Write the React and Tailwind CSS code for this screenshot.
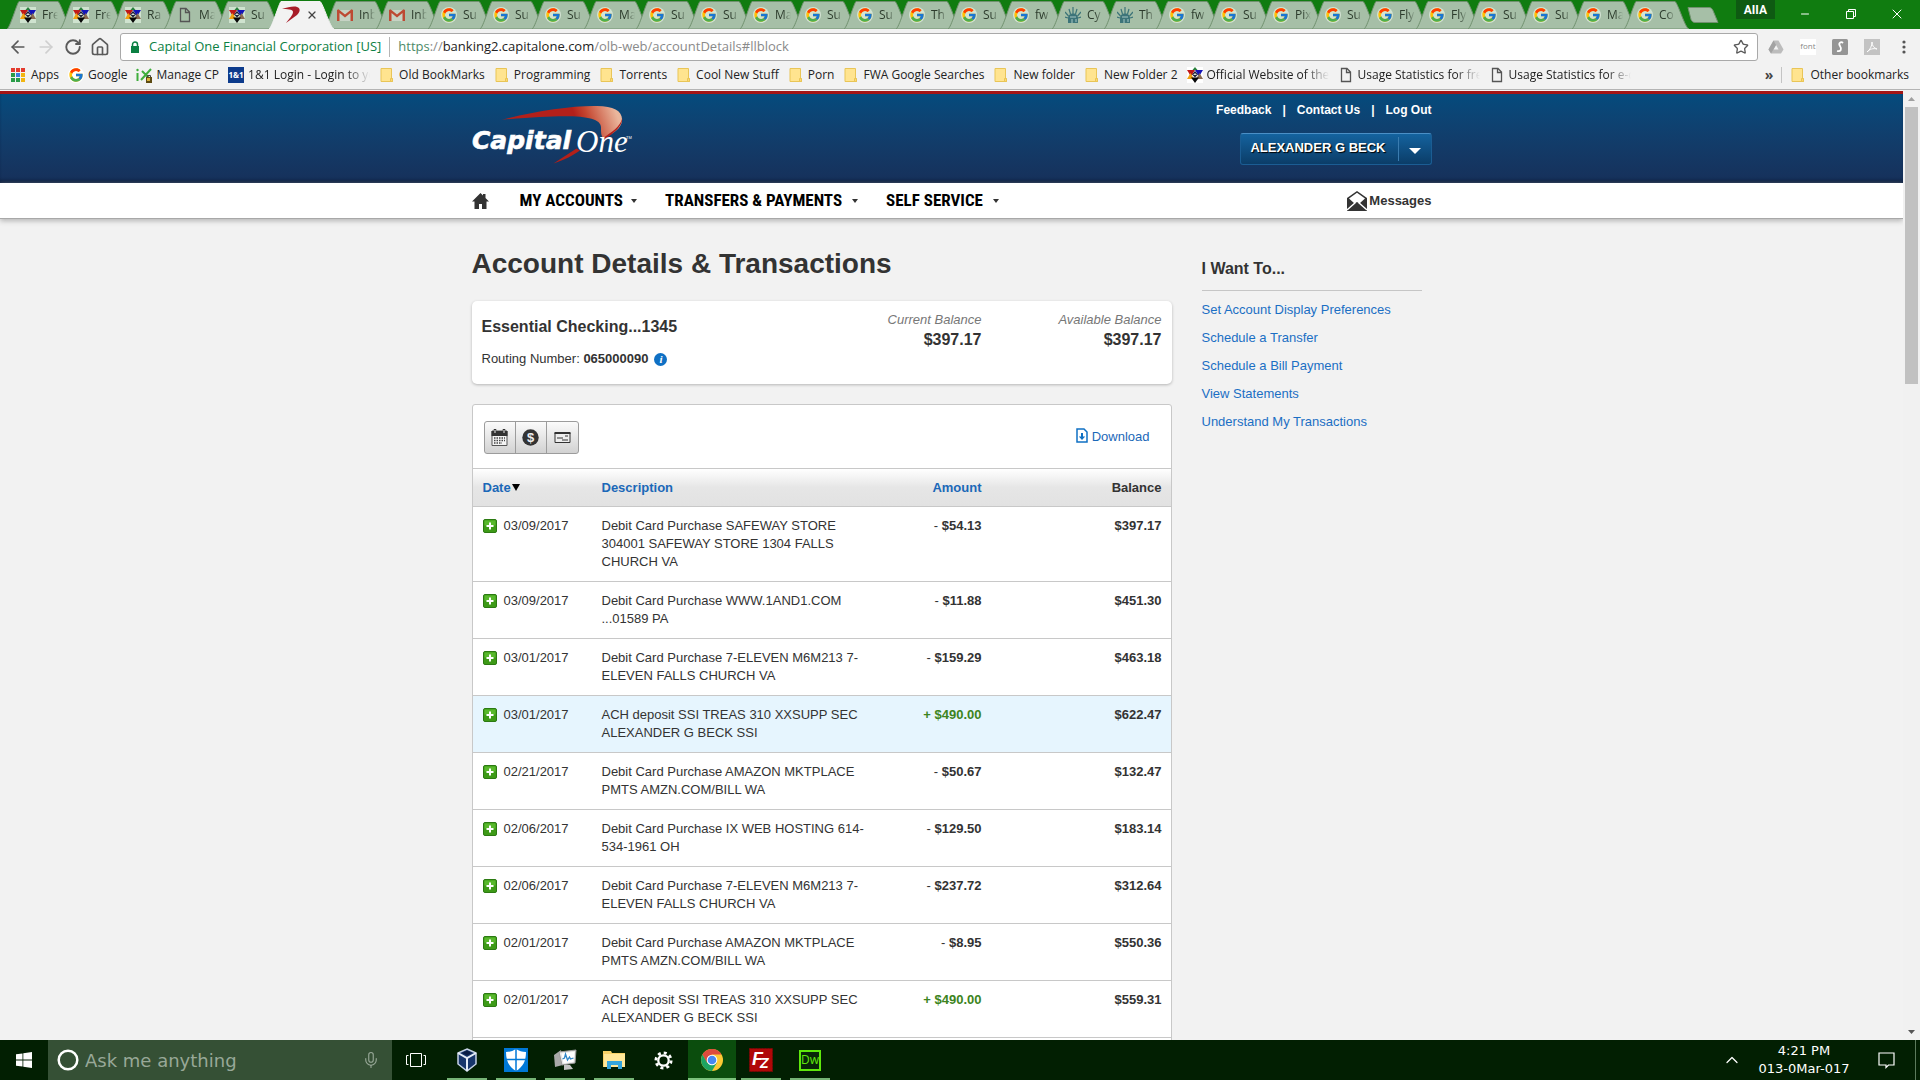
import React from 'react';
import { FcGoogle } from 'react-icons/fc';
import { ArrowLeft, ArrowRight, RotateCw, House, Star, X, Minus, ChevronUp, Mic } from 'lucide-react';

const tabs = [
  ['star', 'Fre'], ['star', 'Fre'], ['star', 'Ra'], ['page', 'Ma'], ['star', 'Su'], ['capital', ''],
  ['mail', 'Inb'], ['mail', 'Inb'], ['google', 'Su'], ['google', 'Su'], ['google', 'Su'], ['google', 'Ma'],
  ['google', 'Su'], ['google', 'Su'], ['google', 'Ma'], ['google', 'Su'], ['google', 'Su'], ['google', 'Th'],
  ['google', 'Su'], ['google', 'fw'], ['liberty', 'Cy'], ['liberty', 'Th'], ['google', 'fw'], ['google', 'Su'],
  ['google', 'Pix'], ['google', 'Su'], ['google', 'Fly'], ['google', 'Fly'], ['google', 'Su'], ['google', 'Su'],
  ['google', 'Ma'], ['google', 'Co'],
];

const bookmarks = [
  ['apps', 'Apps'], ['google', 'Google'], ['ix', 'Manage CP'], ['one', '1&1 Login - Login to yo'],
  ['folder', 'Old BookMarks'], ['folder', 'Programming'], ['folder', 'Torrents'], ['folder', 'Cool New Stuff'],
  ['folder', 'Porn'], ['folder', 'FWA Google Searches'], ['folder', 'New folder'], ['folder', 'New Folder 2'],
  ['star', 'Official Website of the'], ['page', 'Usage Statistics for fre'], ['page', 'Usage Statistics for e-c'],
];

const transactions = [
  { date: '03/09/2017', text: 'Debit Card Purchase SAFEWAY STORE 304001 SAFEWAY STORE 1304 FALLS CHURCH VA', amount: '$54.13', balance: '$397.17' },
  { date: '03/09/2017', text: 'Debit Card Purchase WWW.1AND1.COM ...01589 PA', amount: '$11.88', balance: '$451.30' },
  { date: '03/01/2017', text: 'Debit Card Purchase 7-ELEVEN M6M213 7-ELEVEN FALLS CHURCH VA', amount: '$159.29', balance: '$463.18' },
  { date: '03/01/2017', text: 'ACH deposit SSI TREAS 310 XXSUPP SEC ALEXANDER G BECK SSI', amount: '$490.00', balance: '$622.47', credit: true, active: true },
  { date: '02/21/2017', text: 'Debit Card Purchase AMAZON MKTPLACE PMTS AMZN.COM/BILL WA', amount: '$50.67', balance: '$132.47' },
  { date: '02/06/2017', text: 'Debit Card Purchase IX WEB HOSTING 614-\u200b534-1961 OH', amount: '$129.50', balance: '$183.14' },
  { date: '02/06/2017', text: 'Debit Card Purchase 7-ELEVEN M6M213 7-ELEVEN FALLS CHURCH VA', amount: '$237.72', balance: '$312.64' },
  { date: '02/01/2017', text: 'Debit Card Purchase AMAZON MKTPLACE PMTS AMZN.COM/BILL WA', amount: '$8.95', balance: '$550.36' },
  { date: '02/01/2017', text: 'ACH deposit SSI TREAS 310 XXSUPP SEC ALEXANDER G BECK SSI', amount: '$490.00', balance: '$559.31', credit: true },
];

const links = [
  'Set Account Display Preferences', 'Schedule a Transfer', 'Schedule a Bill Payment', 'View Statements', 'Understand My Transactions',
];

function Favicon({ type, tab }) {
  switch (type) {
    case 'google':
      return (
        <span className={tab ? 'shrink-0 rounded-full bg-[#d3e3d3]' : 'shrink-0 rounded-full bg-white'}>
          <FcGoogle className="w-4 h-4" />
        </span>
      );
    case 'star':
      return (
        <svg viewBox="0 0 16 16" className={tab ? 'w-4 h-4 shrink-0 bg-[#cfe3cf]' : 'w-4 h-4 shrink-0 bg-white'}>
          <path d="M5.500 3L8 0l2.500 3z" fill="#28803c" />
          <path d="M0 3h8l-4 6.500z" fill="#c01818" />
          <path d="M8 3h8l-4 6.500z" fill="#1414b8" />
          <path d="M0 12l3.500-6L7 12z" fill="#f0a010" />
          <path d="M9 12l3.500-6L16 12z" fill="#8a6a50" />
          <path d="M5 7.500L8 4l3 3.500-3 3z" fill="#20203a" />
          <path d="M6 8h4L8 6z" fill="#d8e0d8" />
          <path d="M4 10.500h8L8 16z" fill="#080808" />
        </svg>
      );
    case 'page':
      return (
        <svg viewBox="0 0 16 16" className="w-4 h-4 shrink-0" fill="none" stroke="#555" strokeWidth="1.3">
          <path d="M3.500 1.500h5.500L12.500 5v9.500h-9zM8.500 1.500v4h4" />
        </svg>
      );
    case 'mail':
      return (
        <svg viewBox="0 0 16 16" className="w-4 h-4 shrink-0">
          <path d="M1 3h14v11H1z" fill="#c6d3c4" />
          <path d="M0 14V3l1.500-.8L8 7.500l6.500-5.300L16 3v11h-2.500V6L8 10.500 2.500 6v8z" fill="#bd4a33" />
        </svg>
      );
    case 'liberty':
      return (
        <svg viewBox="0 0 16 16" className="w-4 h-4 shrink-0">
          <path d="M3 16V11C3 8 5 6.500 8 6.500s5 2 5 4.500v5z" fill="#3c7479" />
          <path d="M8 7V0M5.500 7L4 2M10.500 7L12 2M3.500 9L0 5M12.500 9L16 5M3 11l-3-1M13 11l3-1" stroke="#3c7479" strokeWidth="1.2" />
          <path d="M5 10h6M7 12v4M11 12v3" stroke="#a9c9c6" strokeWidth="1" />
        </svg>
      );
    case 'capital':
      return (
        <svg viewBox="0 0 18 18" className="w-[18px] h-[18px] shrink-0">
          <path d="M0 3C6 1 12 0 15 1c4 1 3 5 0 8L4 17c3-4 7-8 7-11S5 3 0 3z" fill="#a81c28" />
        </svg>
      );
    case 'apps':
      return (
        <svg viewBox="0 0 14 14" className="w-[14px] h-[14px] mr-[2px] shrink-0">
          {['#e33b2e', '#e33b2e', '#e33b2e', '#2a9c48', '#3a7ee0', '#f2b511', '#2a9c48', '#2a9c48', '#f2b511'].map((c, i) => (
            <rect key={i} x={(i % 3) * 5} y={Math.floor(i / 3) * 5} width="4" height="4" fill={c} />
          ))}
        </svg>
      );
    case 'ix':
      return (
        <svg viewBox="0 0 16 16" className="w-4 h-4 shrink-0" fill="none">
          <path d="M1.500 6v8M6 4l9 9M15 2L5 13" stroke="#3fae3c" strokeWidth="2" />
          <circle cx="1.500" cy="3" r="1.200" fill="#3fae3c" />
          <rect x="10" y="10" width="6" height="6" fill="#5c4a12" />
          <path d="M11.500 10V8.500h3V10" stroke="#444" />
          <rect x="11" y="11" width="3" height="3" fill="#d8b23c" />
        </svg>
      );
    case 'one':
      return (
        <span className="w-4 h-4 shrink-0 bg-[#0d3b8c] text-white text-[8px] leading-4 font-bold text-center">1&amp;1</span>
      );
    default:
      return (
        <svg viewBox="0 0 16 16" className="w-4 h-4 shrink-0">
          <path d="M2 1.500h10.500v9.500l1 1v2.500H2z" fill="#ffe48f" stroke="#e9c557" />
          <path d="M11.500 14.500v-3h2v3z" fill="#ffd970" stroke="#e9c557" />
        </svg>
      );
  }
}

function Tab({ type, title }) {
  const active = type === 'capital';
  return (
    <li className={active ? 'relative z-10 w-[53px] h-[29px] ml-px mr-[2px]' : 'relative w-[52px] first:w-[53px] h-[29px]'}>
      <svg viewBox="0 0 65 29" className="absolute left-0 top-0 w-[65px] h-[29px]">
        <path d="M0 29C3 28 10 3 12 1.500h39C54 3 61 28 65 29z" fill={active ? '#f2f2f2' : '#a6bfa7'} stroke={active ? '#f2f2f2' : '#71916f'} />
      </svg>
      <a href="#tab" className="relative flex items-center gap-[6px] pl-[13px] h-full text-[12px] text-[#2c3b2c]">
        <Favicon type={type} tab />
        {active ? (
          <X className="w-3 h-3 shrink-0 text-[#444]" strokeWidth={2.5} />
        ) : (
          <span className="w-4 whitespace-nowrap [mask-image:linear-gradient(to_right,black_50%,transparent)]">{title}</span>
        )}
      </a>
    </li>
  );
}

function Caret({ className }) {
  return (
    <svg viewBox="0 0 8 5" className={className} preserveAspectRatio="none">
      <path d="M0 0h8L4 5z" fill="currentColor" />
    </svg>
  );
}

function Browser() {
  return (
    <header className="shrink-0 bg-[#f2f2f2] font-['Open_Sans','Noto_Sans',sans-serif]">
      <div className="flex justify-between bg-[#107c10]">
        <div className="flex items-center">
          <ul className="flex pl-[7px]">
            {tabs.map(([type, title], i) => <Tab key={i} type={type} title={title} />)}
          </ul>
          <button type="button" aria-label="New tab" className="ml-[10px]">
            <svg viewBox="0 0 34 16" className="w-[34px] h-4">
              <path d="M2 .5h21c2 0 3 1 4 3l5 12H9c-2 0-3-1-4-3z" fill="#a6bfa7" stroke="#71916f" />
            </svg>
          </button>
        </div>
        <div className="flex items-start text-white">
          <button type="button" className="mr-[7px] px-2 h-[19px] bg-[#0e5a12] font-[Roboto,sans-serif] text-[12px] font-bold leading-[18px]">AIIA</button>
          <button type="button" aria-label="Minimize" className="w-[46px] h-[28px] flex items-center justify-center"><Minus className="w-3 h-3" /></button>
          <button type="button" aria-label="Restore" className="w-[46px] h-[28px] flex items-center justify-center">
            <svg viewBox="0 0 10 10" className="w-[10px] h-[10px]" fill="none" stroke="currentColor"><path d="M.5 2.500h7v7h-7zM2.500 2.500v-2h7v7h-2" /></svg>
          </button>
          <button type="button" aria-label="Close" className="w-[46px] h-[28px] flex items-center justify-center"><X className="w-4 h-4" strokeWidth={1.5} /></button>
        </div>
      </div>

      <div className="flex items-center h-9 px-2 text-[#5a5a5a]">
        <div className="flex items-center gap-2 w-28">
          <button type="button" aria-label="Back"><ArrowLeft className="w-5 h-5" /></button>
          <button type="button" aria-label="Forward"><ArrowRight className="w-5 h-5 text-[#cfcfcf]" /></button>
          <button type="button" aria-label="Reload"><RotateCw className="w-[18px] h-[18px]" strokeWidth={2.5} /></button>
          <button type="button" aria-label="Home"><House className="w-5 h-5" /></button>
        </div>
        <div className="flex flex-1 items-center h-7 px-2 bg-white border border-[#a9a9a9] rounded-[3px] text-[13px]">
          <svg viewBox="0 0 10 13" className="w-[10px] h-[13px] mx-px mr-[9px] shrink-0">
            <path d="M1 5h8v7H1z" fill="#0b8043" />
            <path d="M2.500 5V3.500a2.500 2.500 0 015 0V5" fill="none" stroke="#0b8043" strokeWidth="1.500" />
          </svg>
          <span className="shrink-0 text-[#0b8043]">Capital One Financial Corporation [US]</span>
          <span className="mx-2 w-px h-5 shrink-0 bg-[#b5b5b5]" />
          <p className="flex-1 text-[#8a8a8a]">
            <span className="text-[#4c8a67]">https</span>://<span className="text-[#222]">banking2.capitalone.com</span>/olb-web/accountDetails#llblock
          </p>
          <button type="button" aria-label="Bookmark"><Star className="w-4 h-4" /></button>
        </div>
        <div className="flex items-center gap-4 pl-[10px]">
          <svg viewBox="0 0 16 16" className="w-4 h-4">
            <path d="M5.500 1.500h5l5 9-2.500 4H3l-2.500-4z" fill="#bcbcbc" />
            <path d="M8 6l2.500 4.500h-5z" fill="#f2f2f2" />
            <path d="M5.500 1.500L.5 10.500l2.500 4L8 6z" fill="#a3a3a3" />
          </svg>
          <span className="w-4 h-4 bg-white text-[8px] leading-[14px] text-center text-[#888]">font</span>
          <svg viewBox="0 0 16 16" className="w-4 h-4">
            <rect width="16" height="16" rx="1.500" fill="#959595" />
            <path d="M11 4C9 2 6 4 8 7s1 6-3 5" fill="none" stroke="#fff" strokeWidth="1.800" />
          </svg>
          <svg viewBox="0 0 16 16" className="w-4 h-4">
            <rect width="16" height="16" fill="#c3c3c3" />
            <path d="M3 13c3-2 5-6 5-10 0 4 2 6 5 7-4-1-7 0-10 3z" fill="none" stroke="#fff" />
          </svg>
          <svg viewBox="0 0 16 16" className="w-4 h-4" fill="#555"><circle cx="8" cy="3" r="1.600" /><circle cx="8" cy="8" r="1.600" /><circle cx="8" cy="13" r="1.600" /></svg>
        </div>
      </div>

      <nav className="flex items-center h-[25px] pb-1 px-[11px] border-b border-[#b4b4b4] text-[12px] text-[#222]">
        <ul className="flex flex-1 items-center gap-[9px]">
          {bookmarks.map(([type, title]) => (
            <li key={title}>
              <a href="#bookmark" className="flex items-center gap-1">
                <Favicon type={type} />
                <span className={title.length > 20 ? 'w-[122px] overflow-hidden whitespace-nowrap [mask-image:linear-gradient(to_right,black_80%,transparent)]' : 'whitespace-nowrap'}>{title}</span>
              </a>
            </li>
          ))}
        </ul>
        <button type="button" className="font-bold text-[14px] text-[#444] leading-4">»</button>
        <span className="mx-2 w-px h-4 bg-[#c4c4c4]" />
        <a href="#bookmark" className="flex items-center gap-1"><Favicon type="folder" />Other bookmarks</a>
      </nav>
    </header>
  );
}

function Logo() {
  return (
    <svg viewBox="7 0 168 75" className="w-[168px] h-[75px]" role="img" aria-label="Capital One">
      <defs>
        <linearGradient id="swoosh" x1="0" x2="1" y1="0.3" y2="0.2">
          <stop offset="0.6" stopColor="#b3201a" />
          <stop offset="0.7" stopColor="#c4452f" />
          <stop offset="0.95" stopColor="#eab69c" />
        </linearGradient>
      </defs>
      <path d="M37 21.700C70 13 108 7.500 132 8c17 .3 26 5 25 15-1 8-9 12-18 18-3-3-3-6-3-12-1-12-30-13-99-7.300z" fill="url(#swoosh)" />
      <path d="M157.300 20c0 9-9 15-17 21l-2-1c8-6 17-11 19-20z" fill="#b3201a" />
      <path d="M88.500 65.500l23-15 3.500 2c-7 5-15 9-26.500 13z" fill="#b3201a" />
      <text x="7" y="51" fontSize="25" fontWeight="700" fontStyle="italic" fill="#fff" stroke="#fff" strokeWidth=".6" fontFamily="'DejaVu Sans', sans-serif">Capital</text>
      <text x="111" y="54" fontSize="31" fontStyle="italic" fill="#fff" fontFamily="'Liberation Serif', serif">One</text>
      <text x="161" y="41" fontSize="4" fill="#fff" fontFamily="'Liberation Sans', sans-serif">TM</text>
    </svg>
  );
}

function Page() {
  return (
    <div className="flex-1 overflow-hidden bg-[#f2f2f2]">
      <div className="border-t-[3px] border-[#a31515] bg-linear-to-b from-[#044b7d] to-[#16305a] shadow-[inset_0_-4px_3px_-1px_#0d2140]">
        <div className="flex justify-between w-[960px] mx-auto h-[89px] pt-1">
          <a href="#home"><Logo /></a>
          <div className="flex flex-col items-end font-bold text-white">
            <div className="flex gap-[11px] mt-1 text-[12px] leading-4">
              <a href="#feedback">Feedback</a>
              <span>|</span>
              <a href="#contact">Contact Us</a>
              <span>|</span>
              <a href="#logout">Log Out</a>
            </div>
            <button type="button" className="flex items-center mt-[15px] h-8 pl-[9px] rounded-[3px] border border-[#1b5d93] border-t-[#4a8fc6] bg-linear-to-b from-[#14639f] to-[#0b3d68] text-[13px] font-bold">
              <span className="pb-[3px] pr-3 [text-shadow:1px_1px_1px_#000]">ALEXANDER G BECK</span>
              <span className="flex items-center h-6 px-[10px] border-l border-[#3a7cb0]"><Caret className="w-3 h-[6px] mt-1" /></span>
            </button>
          </div>
        </div>
      </div>

      <nav className="relative bg-white border-b border-[#a8a8a8] shadow-[0_2px_5px_#b5b5b5]">
        <div className="flex items-center w-[960px] mx-auto h-[35px] pt-px font-['Roboto_Condensed',Roboto,sans-serif] text-[17px] font-bold text-black">
          <a href="#home" aria-label="Home" className="mr-[31px] text-[#333]">
            <svg viewBox="0 0 17 16" className="w-[17px] h-4" fill="currentColor"><path d="M8.500 0L11 2.500V1h2.500v4L17 8.500h-2.500V16H10v-5H7v5H2.500V8.500H0z" /></svg>
          </a>
          <a href="#accounts" className="flex items-center gap-2 mr-7">MY ACCOUNTS <Caret className="w-[6px] h-1 text-[#333]" /></a>
          <a href="#transfers" className="flex items-center gap-[10px] mr-7">TRANSFERS &amp; PAYMENTS <Caret className="w-[6px] h-1 text-[#333]" /></a>
          <a href="#service" className="flex items-center gap-[10px]">SELF SERVICE <Caret className="w-[6px] h-1 text-[#333]" /></a>
          <a href="#messages" className="flex items-center gap-[2px] ml-auto font-['Liberation_Sans',Arial,sans-serif] text-[13px] text-[#333]">
            <svg viewBox="0 0 20 20" className="w-5 h-5">
              <path d="M0 7L10 0l10 7v13H0z" fill="#333" />
              <path d="M2 7.500l8-5.800 8 5.800-5.500 5L10 11l-2.500 1.500z" fill="#fff" />
              <path d="M0 19l8.500-7.500M20 19l-8.500-7.500" stroke="#fff" strokeWidth="1.400" />
            </svg>
            Messages
          </a>
        </div>
      </nav>

      <div className="flex gap-[30px] w-[960px] mx-auto">
        <main className="w-[700px]">
          <h1 className="mt-7 mb-5 text-[28px] leading-[34px] font-bold text-[#333]">Account Details &amp; Transactions</h1>

          <section className="flex h-[83px] pl-[10px] pr-[10px] pt-[11px] rounded-[5px] bg-white shadow-[0_1px_3px_#b5b5b5]">
            <div className="flex-1">
              <h2 className="mt-[5px] text-[16px] leading-5 font-bold">Essential Checking...1345</h2>
              <p className="flex items-center mt-3 text-[13px] leading-5">
                Routing Number:&nbsp;<b>065000090</b>
                <button type="button" aria-label="Routing number help" className="ml-[6px] w-[13px] h-[13px] rounded-full bg-[#0f70c4] font-['Liberation_Serif',serif] text-[11px] leading-[13px] italic font-bold text-white">i</button>
              </p>
            </div>
            <dl className="w-[180px] text-right">
              <dt className="text-[13px] leading-4 italic text-[#777]">Current Balance</dt>
              <dd className="text-[16px] leading-6 font-bold">$397.17</dd>
            </dl>
            <dl className="w-[180px] text-right">
              <dt className="text-[13px] leading-4 italic text-[#777]">Available Balance</dt>
              <dd className="text-[16px] leading-6 font-bold">$397.17</dd>
            </dl>
          </section>

          <section className="mt-5 rounded-t-[3px] border border-[#c8c8c8] bg-white">
            <div className="flex justify-between h-[63px] pt-4 pl-[11px] pr-[21px]">
              <div className="flex h-[33px] rounded-[3px] border border-[#9c9c9c] divide-x divide-[#9c9c9c] bg-linear-to-b from-[#fbfbfb] to-[#d2d2d2]">
                <button type="button" aria-label="Filter by date" className="w-[31px] flex items-center justify-center">
                  <svg viewBox="0 0 17 17" className="w-[17px] h-[17px]">
                    <path d="M1 2h15v14.500H1z" fill="#f4f4f4" stroke="#555" />
                    <path d="M.5 2h16v5H.5z" fill="#333" />
                    <path d="M4 0v4M13 0v4" stroke="#333" strokeWidth="2.500" />
                    <path d="M4 1v3M13 1v3" stroke="#eee" />
                    <path d="M3 9h11M3 11.500h11M3 14h8" stroke="#444" strokeWidth="1.500" strokeDasharray="1.500 1" />
                  </svg>
                </button>
                <button type="button" aria-label="Filter by amount" className="w-[31px] flex items-center justify-center">
                  <svg viewBox="0 0 17 17" className="w-[17px] h-[17px]">
                    <circle cx="8.500" cy="8.500" r="8.200" fill="#333" />
                    <text x="8.500" y="13" textAnchor="middle" fontSize="13" fontWeight="700" fill="#eee" fontFamily="'Liberation Sans', sans-serif">$</text>
                  </svg>
                </button>
                <button type="button" aria-label="Filter by check" className="w-[31px] flex items-center justify-center">
                  <svg viewBox="0 0 17 17" className="w-[17px] h-[17px]" fill="none" stroke="#333">
                    <path d="M1 4h15v9.500H1z" fill="#eee" />
                    <path d="M.5 4h16" strokeWidth="2" />
                    <path d="M3 9h6M11 7h3M8 11h6" strokeWidth="1.200" />
                  </svg>
                </button>
              </div>
              <a href="#download" className="flex items-start gap-1 pt-[7px] text-[13px] leading-[18px] text-[#1b68b8]">
                <svg viewBox="0 0 12 15" className="w-3 h-[15px]" fill="none" stroke="#0f70c4">
                  <path d="M1 1h7l3 3v10H1z" strokeWidth="1.500" />
                  <path d="M6 5v5" strokeWidth="2" />
                  <path d="M2.800 8.500h6.400L6 12z" fill="#0f70c4" stroke="none" />
                </svg>
                Download
              </a>
            </div>

            <table className="w-full table-fixed border-t border-[#c8c8c8] text-[13px] leading-[18px]">
              <colgroup>
                <col className="w-[129px]" />
                <col className="w-[270px]" />
                <col />
                <col className="w-[189px]" />
              </colgroup>
              <thead>
                <tr className="h-[38px] bg-linear-to-b from-white via-[#e6e6e6] to-[#e2e2e2] border-b border-[#c8c8c8] text-[#1b68b8]">
                  <th className="pl-[10px] text-left"><button type="button" className="flex items-center font-bold">Date<Caret className="ml-px w-2 h-[7px] text-black" /></button></th>
                  <th className="text-left"><button type="button" className="font-bold">Description</button></th>
                  <th className="text-right"><button type="button" className="font-bold">Amount</button></th>
                  <th className="pr-[9px] text-right text-[#333]">Balance</th>
                </tr>
              </thead>
              <tbody>
                {transactions.map((t, i) => (
                  <tr key={i} className={t.active ? 'align-top border-b border-[#c8c8c8] bg-[#e6f5fe]' : 'align-top border-b border-[#c8c8c8]'}>
                    <td className="pl-[10px] py-[10px]">
                      <span className="flex items-center gap-[7px]">
                        <button type="button" aria-label="Expand transaction">
                          <svg viewBox="0 0 14 14" className="w-[14px] h-[14px]">
                            <rect x=".5" y=".5" width="13" height="13" rx="1.500" fill="#3d9a17" stroke="#2c7a12" />
                            <path d="M1.500 1.500h11v5h-11z" fill="#58b82c" />
                            <path d="M7 3.500v7M3.500 7h7" stroke="#fff" strokeWidth="2" />
                          </svg>
                        </button>
                        {t.date}
                      </span>
                    </td>
                    <td className="py-[10px]">{t.text}</td>
                    <td className={t.credit ? 'py-[10px] text-right font-bold text-[#3c8420]' : 'py-[10px] text-right font-bold'}>
                      <span className={t.credit ? 'font-bold' : 'font-normal'}>{t.credit ? '+' : '-'}</span> {t.amount}
                    </td>
                    <td className="py-[10px] pr-[9px] text-right font-bold">{t.balance}</td>
                  </tr>
                ))}
              </tbody>
            </table>
            <div className="h-12" />
          </section>
        </main>

        <aside className="w-[220px] pt-[38px]">
          <h2 className="pb-[9px] border-b border-[#c6c6c6] text-[16px] leading-6 font-bold">I Want To...</h2>
          <ul className="pt-[5px] text-[13px] leading-7 text-[#1b6fc4]">
            {links.map((link) => <li key={link}><a href="#link">{link}</a></li>)}
          </ul>
        </aside>
      </div>
    </div>
  );
}

function TaskItem({ label, open = true, active, children }) {
  return (
    <button type="button" aria-label={label} className={active ? 'relative w-12 flex items-center justify-center bg-[#0b4d0d]' : 'relative w-12 flex items-center justify-center'}>
      {children}
      {open && <span className={active ? 'absolute inset-x-0 bottom-0 h-[2px] bg-[#7cc27c]' : 'absolute inset-x-1 bottom-0 h-[2px] bg-[#76b476]'} />}
    </button>
  );
}

function Taskbar() {
  return (
    <footer className="flex h-10 shrink-0 bg-[#021f02] text-white font-['DejaVu_Sans',sans-serif]">
      <button type="button" aria-label="Start" className="w-12 flex items-center justify-center">
        <svg viewBox="0 0 16 16" className="w-4 h-4" fill="#fff"><path d="M0 2.300L6.500 1.400v6.200H0zM7.300 1.300L16 0v7.600H7.300zM0 8.400h6.500v6.200L0 13.700zM7.300 8.400H16V16l-8.700-1.300z" /></svg>
      </button>
      <label className="flex items-center gap-[6px] w-[344px] pl-[9px] pr-3 bg-[#355035]">
        <svg viewBox="0 0 22 22" className="w-[22px] h-[22px]" fill="none" stroke="#fff" strokeWidth="2.500"><circle cx="11" cy="11" r="9.300" /></svg>
        <input type="text" aria-label="Search" placeholder="Ask me anything" className="flex-1 min-w-0 bg-transparent text-[18px] outline-none placeholder:text-[#98a898]" />
        <Mic className="w-[18px] h-[18px] text-[#98a898]" strokeWidth={1.5} />
      </label>
      <button type="button" aria-label="Task view" className="w-12 mr-[3px] flex items-center justify-center">
        <svg viewBox="0 0 20 14" className="w-5 h-[14px]" fill="none" stroke="#fff"><path d="M4.500 .5h11v13h-11zM2.500 2.500h-2v9h2M17.500 2.500h2v9h-2" /></svg>
      </button>
      <div className="flex gap-px">
        <TaskItem label="VirtualBox">
          <svg viewBox="0 0 22 24" className="w-[22px] h-6">
            <path d="M11 1l9 4v11l-9 7-9-7V5z" fill="#17356b" stroke="#c6d2e6" strokeWidth="1.500" />
            <path d="M2 5l9 5 9-5M11 10v13" fill="none" stroke="#e4ebf6" strokeWidth="2" />
            <path d="M6 5l5-2.500L16 5l-5 2.500z" fill="#0a1c44" />
          </svg>
        </TaskItem>
        <TaskItem label="Defender">
          <svg viewBox="0 0 24 24" className="w-6 h-6">
            <path d="M0 0h24v24H0z" fill="#0078d7" />
            <path d="M12 1c3 2 6 3 10 3 0 9-3 15-10 19C5 19 2 13 2 4c4 0 7-1 10-3z" fill="#fff" />
            <path d="M12 0v24M1 11.500h22" stroke="#0078d7" strokeWidth="1.500" />
          </svg>
        </TaskItem>
        <TaskItem label="Task Manager">
          <svg viewBox="0 0 24 22" className="w-6 h-[22px]">
            <path d="M1 6l7-5 2 15-8 2z" fill="#a9a9a9" />
            <path d="M6 3l17-2-1 13-13 2z" fill="#e8e8e8" stroke="#999" />
            <path d="M8.500 4.500l13-1.700-1 10-10 1.500z" fill="#fff" />
            <path d="M9.500 10l2-1 1-4 2 6 2-3 1 2 3-1" fill="none" stroke="#2f86c8" strokeWidth="1.300" />
            <path d="M11 16h6l3 4-9 1z" fill="#c4c4c4" />
          </svg>
        </TaskItem>
        <TaskItem label="File Explorer">
          <svg viewBox="0 0 22 20" className="w-[22px] h-5">
            <path d="M0 1h8l1 2h13v14H0z" fill="#f7d268" />
            <path d="M1 4h21v13H1z" fill="#ffe799" />
            <path d="M4 19v-8h15v8h-4v-4H8v4z" fill="#35a5dc" />
          </svg>
        </TaskItem>
        <TaskItem label="Settings" open={false}>
          <svg viewBox="0 0 20 20" className="w-[19px] h-[19px]" fill="none" stroke="#fff">
            <circle cx="10" cy="10" r="5.500" strokeWidth="2.400" />
            <circle cx="10" cy="10" r="8" strokeWidth="3" strokeDasharray="3.140 3.143" />
          </svg>
        </TaskItem>
        <TaskItem label="Chrome" active>
          <svg viewBox="0 0 22 22" className="w-[22px] h-[22px]">
            <circle cx="11" cy="11" r="11" fill="#fcc934" />
            <path d="M1.500 5.500A11 11 0 0111 0a11 11 0 019.500 5.500H11L6 14z" fill="#dd4b3e" />
            <path d="M1.500 5.500A11 11 0 0011 22l5-8.500-5 2-5-2z" fill="#1da462" />
            <circle cx="11" cy="11" r="5.300" fill="#fff" />
            <circle cx="11" cy="11" r="4.300" fill="#4688f1" />
          </svg>
        </TaskItem>
        <TaskItem label="FileZilla">
          <svg viewBox="0 0 24 24" className="w-6 h-6">
            <rect x=".5" y=".5" width="23" height="23" fill="#b00808" stroke="#7c0606" strokeDasharray="2 1" />
            <text x="3" y="17" fontSize="18" fontWeight="700" fontStyle="italic" fill="#fff" fontFamily="'Liberation Sans', sans-serif">F</text>
            <text x="11" y="20" fontSize="14" fontWeight="700" fontStyle="italic" fill="#fff" fontFamily="'Liberation Sans', sans-serif">Z</text>
          </svg>
        </TaskItem>
        <TaskItem label="Dreamweaver">
          <span className="w-[22px] h-[21px] border-2 border-[#5fe80c] bg-[#082608] font-['Open_Sans',sans-serif] text-[12px] leading-4 text-[#5fe80c]">Dw</span>
        </TaskItem>
      </div>
      <div className="flex items-center ml-auto pr-1">
        <button type="button" aria-label="Show hidden icons"><ChevronUp className="w-5 h-5" strokeWidth={1.5} /></button>
        <p className="w-[124px] text-center text-[13px] leading-[18px]">4:21 PM<br />013-0Mar-017</p>
        <button type="button" aria-label="Notifications" className="mr-5 ml-3">
          <svg viewBox="0 0 17 17" className="w-[17px] h-[17px]" fill="none" stroke="#fff" strokeWidth="1.200"><path d="M1 1h15v12h-5.500l-2.500 2.500V13H1z" /></svg>
        </button>
        <span className="w-px h-10 bg-[#5c7a5c]" />
      </div>
    </footer>
  );
}

export default function App() {
  return (
    <div className="flex flex-col h-screen overflow-hidden bg-[#f2f2f2] font-['Liberation_Sans',Arial,sans-serif] text-[#333]">
      <Browser />
      <div className="flex flex-1 min-h-0 pt-px">
        <Page />
        <div className="flex flex-col items-center justify-between w-[17px] py-[6px] bg-[#f1f1f1] text-[#555]">
          <Caret className="w-[7px] h-1 rotate-180 text-[#a0a0a0]" />
          <div className="mt-[6px] mb-auto w-[13px] h-[277px] bg-[#c1c1c1]" />
          <Caret className="w-[7px] h-1" />
        </div>
      </div>
      <Taskbar />
    </div>
  );
}
